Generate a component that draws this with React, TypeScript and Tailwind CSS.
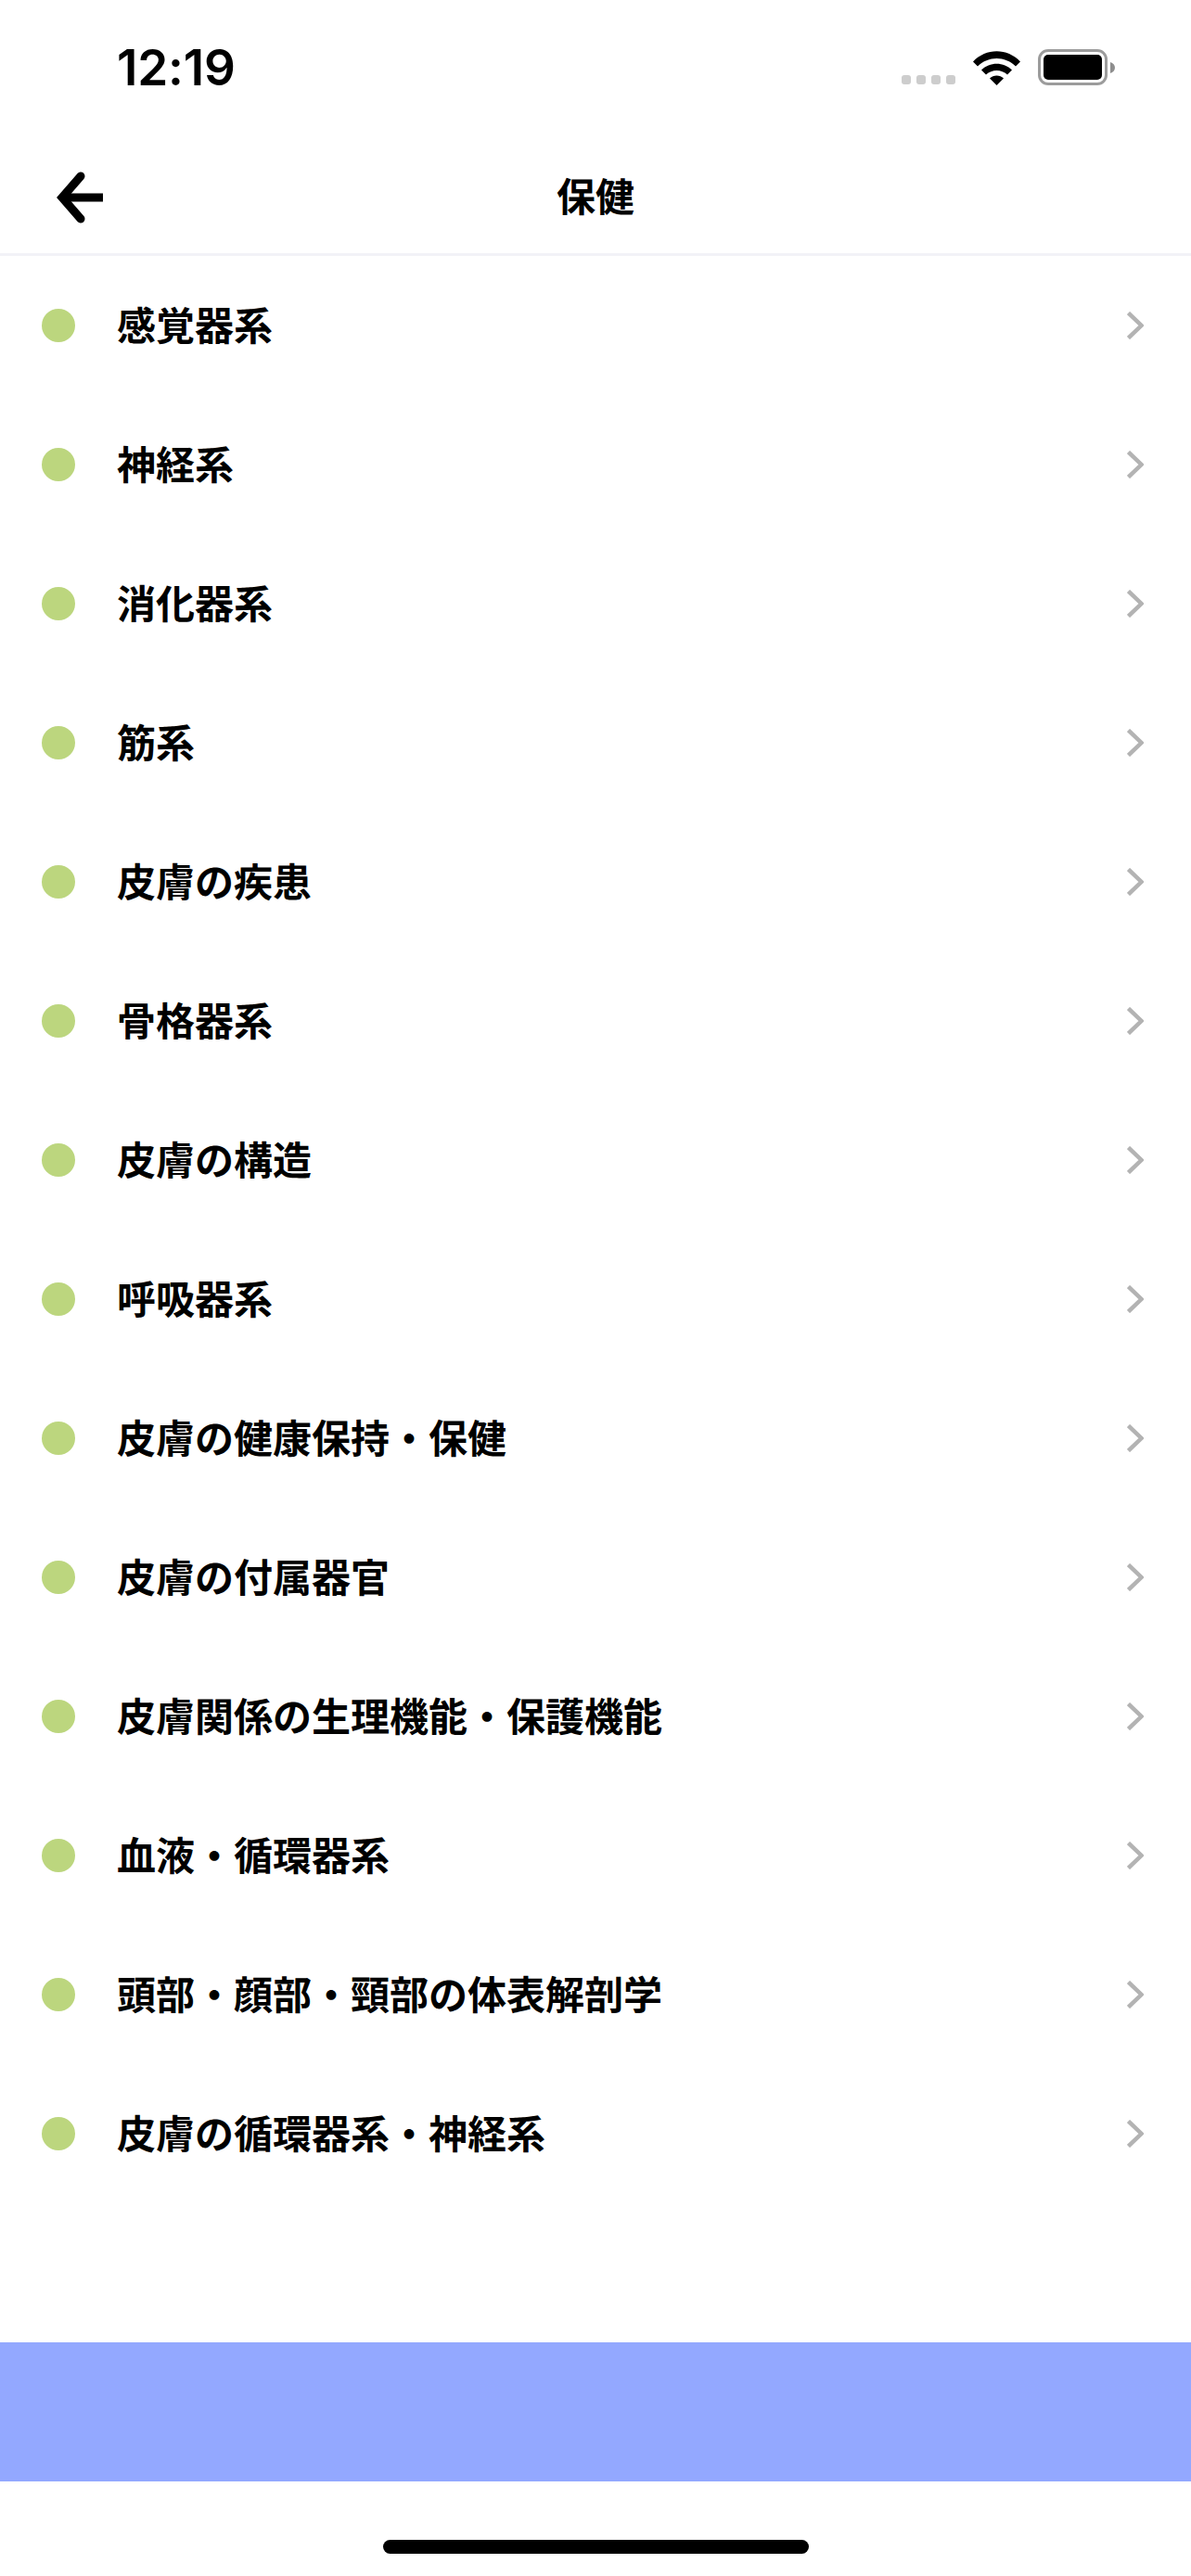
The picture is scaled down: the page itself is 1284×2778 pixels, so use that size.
import React from "react";

const items = [
  "感覚器系",
  "神経系",
  "消化器系",
  "筋系",
  "皮膚の疾患",
  "骨格器系",
  "皮膚の構造",
  "呼吸器系",
  "皮膚の健康保持・保健",
  "皮膚の付属器官",
  "皮膚関係の生理機能・保護機能",
  "血液・循環器系",
  "頭部・顔部・頸部の体表解剖学",
  "皮膚の循環器系・神経系",
];

function Wifi() {
  return (
    <svg width="51" height="37" viewBox="0 0 51 37" className="block">
      <path d="M0 11.5 C14 -3.5 37 -3.5 51 11.5 L46 16.5 C34.5 5 16.5 5 5 16.5 Z" fill="#000" />
      <path d="M9 20.5 C18 11.5 33 11.5 42 20.5 L37 25.5 C30.5 19.5 20.5 19.5 14 25.5 Z" fill="#000" />
      <path d="M18 29.5 C22 25.5 29 25.5 33 29.5 L25.5 37 Z" fill="#000" />
    </svg>
  );
}

function Battery() {
  return (
    <div className="flex items-center">
      <div className="w-[75px] h-[39px] rounded-[11px] border-[3px] border-[#9c9c9c] p-[3px] box-border">
        <div className="w-full h-full rounded-[5px] bg-black" />
      </div>
      <svg width="5" height="12" viewBox="0 0 5 12" className="block ml-[3px]">
        <path d="M0 0 C3 1 5 3 5 6 C5 9 3 11 0 12 Z" fill="#8e8e8e" />
      </svg>
    </div>
  );
}

export default function App() {
  return (
    <div
      className="w-[1284px] h-[2778px] bg-white flex flex-col text-black overflow-hidden"
      style={{ fontFamily: '"Noto Sans CJK JP", "Noto Sans", sans-serif' }}
    >
      <div className="h-[150px] shrink-0 flex items-start justify-between pl-[126px] pr-[82px] pt-[53px]">
        <span className="text-[53px] leading-[40px] font-semibold tracking-[-0.2px] [font-family:Inter,'Liberation_Sans',sans-serif]">
          12:19
        </span>
        <div className="flex items-end gap-[19px]">
          <div className="flex gap-[6px] mb-px">
            <span className="w-[10px] h-[10px] rounded-[3px] bg-[#cdcdcd]" />
            <span className="w-[10px] h-[10px] rounded-[3px] bg-[#cdcdcd]" />
            <span className="w-[10px] h-[10px] rounded-[3px] bg-[#cdcdcd]" />
            <span className="w-[10px] h-[10px] rounded-[3px] bg-[#cdcdcd]" />
          </div>
          <Wifi />
          <Battery />
        </div>
      </div>

      <div className="h-[126px] shrink-0 relative flex items-center justify-center border-b-[3px] border-[#f2f2f7] box-border pb-[3px]">
        <svg
          width="52"
          height="56"
          viewBox="0 0 52 56"
          className="absolute left-[60px] top-[35px]"
          fill="none"
          stroke="#000"
          strokeWidth="9"
          strokeLinejoin="miter"
        >
          <path d="M27 5 L7 28 L27 51" strokeLinecap="round" />
          <path d="M7 28 H51" />
        </svg>
        <span className="text-[42px] leading-[60px] font-bold">保健</span>
      </div>

      <div className="flex flex-col">
        {items.map((t) => (
          <div key={t} className="h-[150px] flex items-center pl-[45px] pr-[51px]">
            <span className="w-[36px] h-[36px] rounded-full bg-[#bcd67e] shrink-0" />
            <span className="ml-[45px] pb-[4px] flex-1 text-[42px] leading-[60px] font-bold">{t}</span>
            <svg
              width="18"
              height="30"
              viewBox="0 0 18 30"
              fill="none"
              stroke="#b3b3b3"
              strokeWidth="4.5"
              className="block"
            >
              <path d="M1.5 1.5 L15.5 15 L1.5 28.5" />
            </svg>
          </div>
        ))}
      </div>

      <div className="mt-auto h-[252px] shrink-0 flex flex-col">
        <div className="h-[150px] bg-[#93a8ff]" />
        <div className="flex-1 flex justify-center pt-[63px]">
          <div className="w-[459px] h-[15px] rounded-full bg-black" />
        </div>
      </div>
    </div>
  );
}
